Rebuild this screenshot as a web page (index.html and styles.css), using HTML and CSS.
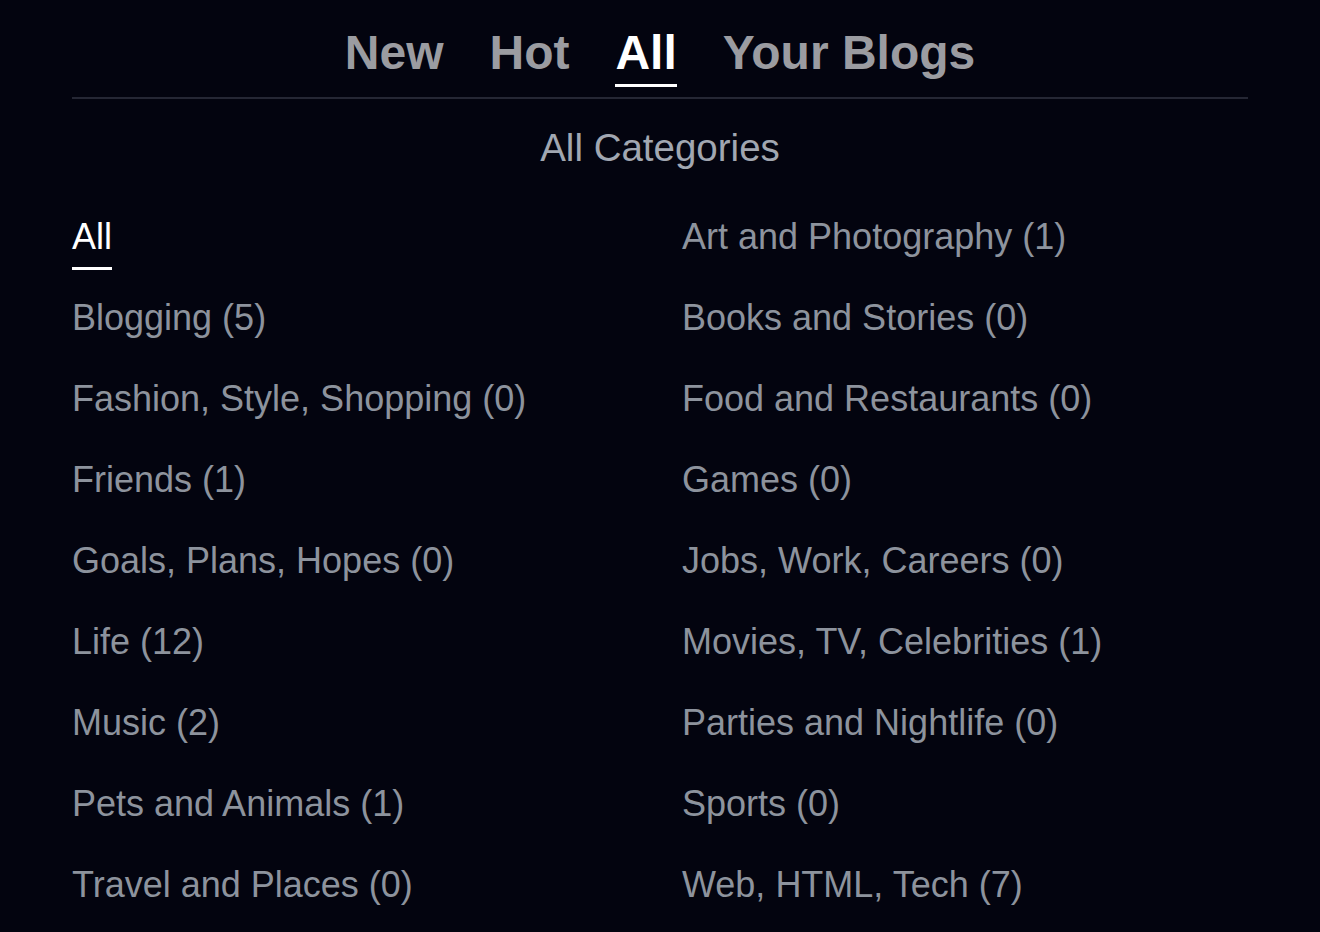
FILE: index.html
```html
<!DOCTYPE html>
<html lang="en">
<head>
    <meta charset="UTF-8">
    <meta name="viewport" content="width=device-width, initial-scale=1.0">
    <title>Blogs - All Categories</title>
    <link rel="stylesheet" href="styles.css">
</head>
<body>
    <div class="page">
        <nav class="tabs">
            <a class="tab" href="#">New</a>
            <a class="tab" href="#">Hot</a>
            <a class="tab active" href="#">All</a>
            <a class="tab" href="#">Your Blogs</a>
        </nav>

        <h2 class="heading">All Categories</h2>

        <div class="categories">
            <a class="category active" href="#">All</a>
            <a class="category" href="#">Art and Photography (1)</a>
            <a class="category" href="#">Blogging (5)</a>
            <a class="category" href="#">Books and Stories (0)</a>
            <a class="category" href="#">Fashion, Style, Shopping (0)</a>
            <a class="category" href="#">Food and Restaurants (0)</a>
            <a class="category" href="#">Friends (1)</a>
            <a class="category" href="#">Games (0)</a>
            <a class="category" href="#">Goals, Plans, Hopes (0)</a>
            <a class="category" href="#">Jobs, Work, Careers (0)</a>
            <a class="category" href="#">Life (12)</a>
            <a class="category" href="#">Movies, TV, Celebrities (1)</a>
            <a class="category" href="#">Music (2)</a>
            <a class="category" href="#">Parties and Nightlife (0)</a>
            <a class="category" href="#">Pets and Animals (1)</a>
            <a class="category" href="#">Sports (0)</a>
            <a class="category" href="#">Travel and Places (0)</a>
            <a class="category" href="#">Web, HTML, Tech (7)</a>
        </div>
    </div>
</body>
</html>
```

FILE: styles.css
```css
body {
    margin: 0;
    padding: 0;
    background-color: #03040f;
    font-family: "Liberation Sans", Arial, Helvetica, sans-serif;
    overflow: hidden;
}
a {
    text-decoration: none;
}
.page {
    padding: 0 72px;
}
.tabs {
    display: flex;
    justify-content: center;
    gap: 46px;
    padding-top: 25px;
    padding-bottom: 10px;
    border-bottom: 2px solid #252734;
}
.tab {
    font-size: 48px;
    font-weight: bold;
    line-height: 56px;
    color: #9b9ca1;
    padding-bottom: 3px;
    border-bottom: 3px solid transparent;
}
.tab.active {
    color: #fff;
    border-bottom-color: #fff;
}
.heading {
    margin: 27px 0 0;
    text-align: center;
    font-size: 38.5px;
    font-weight: normal;
    line-height: 44px;
    color: #a1a7b1;
}
.categories {
    display: grid;
    grid-template-columns: 1fr 1fr;
    column-gap: 44px;
    row-gap: 27px;
    margin-top: 46px;
    justify-items: start;
}
.category {
    display: inline-block;
    font-size: 36px;
    line-height: 42px;
    color: #8d939d;
    padding-bottom: 9px;
    border-bottom: 3px solid transparent;
}
.category.active {
    color: #fff;
    border-bottom-color: #fff;
}
```
